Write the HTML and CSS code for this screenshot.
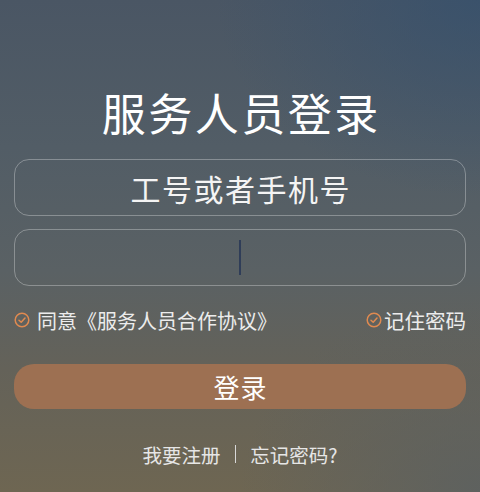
FILE: index.html
```html
<!DOCTYPE html>
<html lang="zh-CN">
<head>
<meta charset="utf-8">
<title>服务人员登录</title>
<link rel="stylesheet" href="styles.css">
</head>
<body>
<div class="page">
  <h1 class="title">服务人员登录</h1>
  <div class="field"><span class="placeholder">工号或者手机号</span></div>
  <div class="field"><span class="cursor"></span></div>
  <div class="options">
    <label class="opt">
      <svg class="check" viewBox="0 0 16 16" width="16" height="16"><circle cx="8" cy="8" r="6.8" fill="none" stroke="#e08a50" stroke-width="1.5"/><path d="M5 8.2 L7.2 10.2 L11 6" fill="none" stroke="#e08a50" stroke-width="1.5" stroke-linecap="round" stroke-linejoin="round"/></svg>
      <span>同意《服务人员合作协议》</span>
    </label>
    <label class="opt opt-right">
      <svg class="check" viewBox="0 0 16 16" width="16" height="16"><circle cx="8" cy="8" r="6.8" fill="none" stroke="#e08a50" stroke-width="1.5"/><path d="M5 8.2 L7.2 10.2 L11 6" fill="none" stroke="#e08a50" stroke-width="1.5" stroke-linecap="round" stroke-linejoin="round"/></svg>
      <span>记住密码</span>
    </label>
  </div>
  <button class="login">登录</button>
  <div class="links">
    <span>我要注册</span>
    <span class="sep"></span>
    <span>忘记密码?</span>
  </div>
</div>
</body>
</html>
```
FILE: styles.css
```css
html, body {
  margin: 0;
  padding: 0;
  height: 100%;
}
body {
  font-family: "Noto Sans CJK SC", "Noto Sans", sans-serif;
  color: #fff;
  background:
    radial-gradient(ellipse 55% 40% at 100% 0%, rgba(52, 80, 110, 0.7), rgba(52, 80, 110, 0) 100%),
    radial-gradient(ellipse 50% 40% at 100% 100%, rgba(90, 96, 98, 0.8), rgba(90, 96, 98, 0) 100%),
    linear-gradient(180deg, #4a5664 0%, #525d66 30%, #5a6164 55%, #646259 75%, #6e6652 100%);
  overflow: hidden;
}
.page {
  padding: 86px 14px 0;
  display: flex;
  flex-direction: column;
}
.title {
  margin: 0;
  font-size: 44px;
  font-weight: 400;
  line-height: 52px;
  text-align: center;
  letter-spacing: 2.5px;
  text-indent: 2.5px;
}
.field {
  height: 55px;
  border: 1px solid rgba(255, 255, 255, 0.3);
  border-radius: 15px;
  display: flex;
  align-items: center;
  justify-content: center;
  margin-top: 21px;
}
.field + .field {
  margin-top: 13px;
}
.placeholder {
  font-size: 30px;
  letter-spacing: 1.5px;
  text-indent: 1.5px;
  color: #f4f4f4;
}
.cursor {
  width: 2px;
  height: 35px;
  background: #2f3d58;
}
.options {
  margin-top: 22px;
  height: 24px;
  display: flex;
  justify-content: space-between;
  align-items: center;
}
.opt {
  display: flex;
  align-items: center;
  gap: 7px;
  font-size: 20px;
  color: #ececec;
}
.opt-right {
  gap: 2px;
  font-size: 20.5px;
}
.check {
  flex: none;
}
.login {
  margin-top: 32px;
  height: 45px;
  border: none;
  border-radius: 20px;
  background: #9d7052;
  color: #fff;
  font-family: inherit;
  font-size: 26px;
  letter-spacing: 1px;
  text-indent: 1px;
}
.links {
  margin-top: 33px;
  height: 24px;
  display: flex;
  justify-content: center;
  align-items: center;
  gap: 14px;
  font-size: 19.5px;
  color: #e6e6e6;
}
.sep {
  width: 1.5px;
  height: 18px;
  background: #d8d8d8;
}
```
